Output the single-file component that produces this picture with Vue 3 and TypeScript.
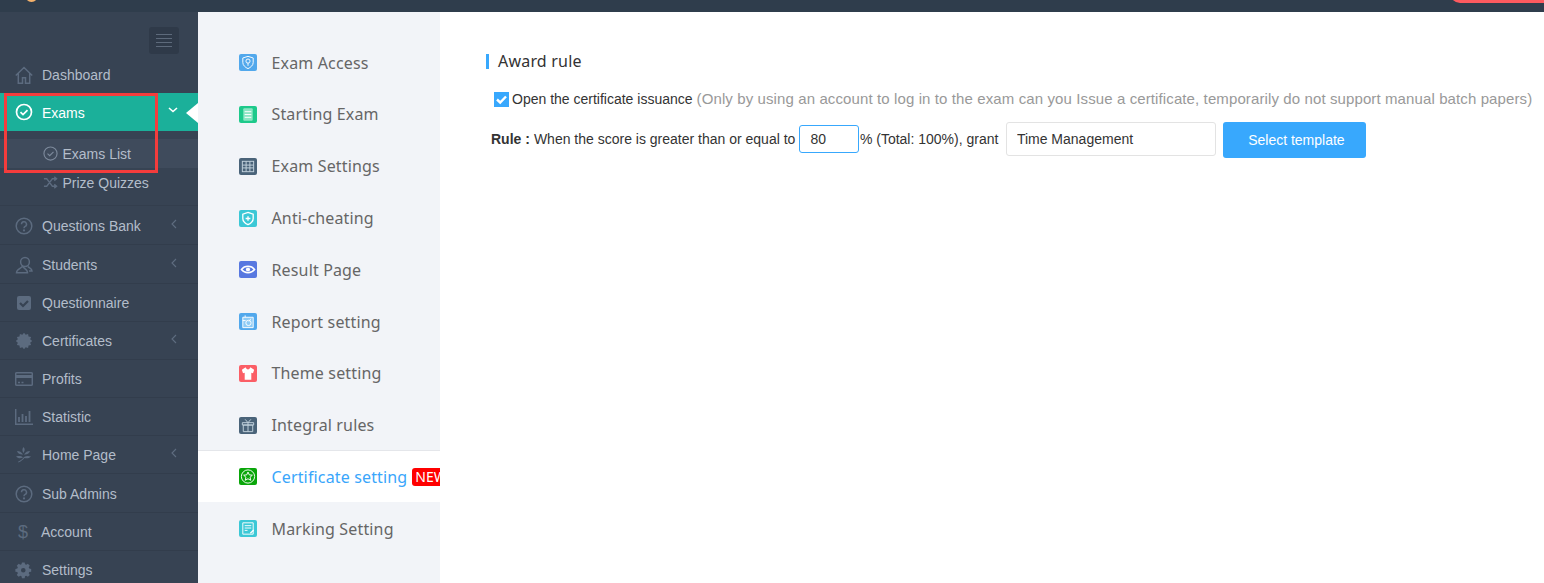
<script setup lang="ts">
interface SideItem { label: string; icon: string; arrow?: boolean; cls?: string }

const tone = '#5c6b7f'
const stroke = `fill="none" stroke="${tone}" stroke-width="1.5"`
const solid = `fill="${tone}"`

function burst(): string {
  const teeth = 12
  const pts: string[] = []
  for (let i = 0; i < teeth * 2; i++) {
    const r = i % 2 === 0 ? 8.2 : 6.4
    const a = (Math.PI * i) / teeth
    pts.push(`${(9 + r * Math.cos(a)).toFixed(2)},${(9 + r * Math.sin(a)).toFixed(2)}`)
  }
  return `<polygon ${solid} points="${pts.join(' ')}"/>`
}

const dashboard = `<path ${stroke} d="M.8 9.500 9 1.500l8.200 8M3.300 7.500v9.800h4.200v-5.500h3v5.500h4.200V7.500"/>`
const question = `<circle ${stroke} cx="9" cy="9" r="7.800"/><path ${stroke} stroke-width="1.700" d="M6.500 7.200a2.500 2.500 0 1 1 3.700 2.200c-.8.500-1.200.9-1.200 1.800"/><circle fill="${tone}" cx="9" cy="13.400" r="1.100"/>`

const lower: SideItem[] = [
  { label: 'Questions Bank', icon: question, arrow: true, cls: 'tall' },
  { label: 'Students', icon: `<circle ${stroke} cx="10" cy="6" r="4.400"/><path ${stroke} d="M7.500 10c0 2-6 2.500-6 6.800h11c0-4.300-5-4.800-5-6.800M13 10.500c1 1.500 4 2 4 4.500h-3"/>`, arrow: true, cls: 'tall' },
  { label: 'Questionnaire', icon: `<rect ${solid} x="2" y="2" width="14" height="14" rx="2"/><path fill="none" stroke="#374353" stroke-width="2.200" d="m5 9 3 3 5-5"/>` },
  { label: 'Certificates', icon: burst(), arrow: true },
  { label: 'Profits', icon: `<rect ${stroke} x="0.700" y="2.700" width="16.600" height="12.600" rx="1"/><rect ${solid} x="1" y="5" width="16" height="3"/><path ${stroke} d="M3 12.500h2M6.500 12.500h2"/>` },
  { label: 'Statistic', icon: `<path ${stroke} d="M.7 1v15.300h18"/><path fill="none" stroke="${tone}" stroke-width="1.800" d="M4 14V9M7.500 14V6M11 14V8M14.500 14V3"/>` },
  { label: 'Home Page', icon: `<path ${solid} d="M8.500 1c1.500 1.500 1.500 3.500.5 5l-.5 1c-1.500-2-1.500-4 0-6zM2 5c2.500 0 4.500 1 6 3.500C5.500 8.800 3 8 2 5zm13 0c-1 3-3.500 3.800-6 3.500C10.500 6 12.500 5 15 5zM1 10.500c3-.8 5.500-.5 7 1-2.500 1.200-5 1-7-1zm15 0c-2 2-4 2.200-6.500 1.500-1.500 1.500-3 3-6 4.500l-.5-.8c2.500-1 4.500-2.700 6-4.700 2-1.200 4.500-1.300 7-.5z"/>`, arrow: true },
  { label: 'Sub Admins', icon: question, cls: 'tall' },
  { label: 'Account', icon: `<text x="3" y="15" font-family="Liberation Sans, sans-serif" font-size="18" fill="${tone}">$</text>`, cls: 'money' },
  { label: 'Settings', icon: `<path ${solid} fill-rule="evenodd" d="M7.500 1.500h3l.4 2.100 1.300.6 1.800-1.200 2.100 2.100-1.200 1.800.6 1.300 2.100.4v3l-2.100.4-.6 1.300 1.200 1.800-2.100 2.100-1.800-1.200-1.300.6-.4 2.100h-3l-.4-2.100-1.300-.6-1.800 1.200-2.100-2.100 1.200-1.800-.6-1.300-2.100-.4v-3l2.100-.4.6-1.300-1.200-1.800 2.100-2.100 1.800 1.200 1.300-.6zM9 7.500a2.500 2.500 0 1 0 0 5 2.500 2.500 0 0 0 0-5z" transform="scale(.92)"/>` },
]

interface NavItem { label: string; bg: string; icon: string; active?: boolean }
const w = 'fill="none" stroke="#fff" stroke-width="1"'
const soft = 'fill="none" stroke="#c4d3de" stroke-width="1"'
const nav: NavItem[] = [
  { label: 'Exam Access', bg: '#52a8ec', icon: `<path ${w} d="M9 2.500l5.500 1.700v4.800c0 3-2.800 5.300-5.500 6.500-2.700-1.200-5.500-3.500-5.500-6.500V4.200z"/><circle ${w} cx="9" cy="7.500" r="2.200"/><path ${w} d="M9 9.700v2.800"/>` },
  { label: 'Starting Exam', bg: '#1ec98b', icon: `<rect x="4" y="2.500" width="10" height="13" rx="1" fill="#8ce6c4"/><path ${w} d="M5.500 6h7M5.500 9h7M5.500 12h7"/>` },
  { label: 'Exam Settings', bg: '#4a6379', icon: `<rect ${soft} x="3" y="3.500" width="12" height="11"/><path ${soft} d="M7 3.500v11M11 3.500v11M3 7.500h12M3 10.500h12"/>` },
  { label: 'Anti-cheating', bg: '#3cc8d6', icon: `<path fill="none" stroke="#fff" stroke-width="1.400" d="M9 2.500l5.500 2v4.500c0 3-2.800 5.300-5.500 6.500-2.700-1.200-5.500-3.500-5.500-6.500V4.500z"/><path stroke="#fff" stroke-width="1.400" d="M9 6.500v5M6.500 9h5"/>` },
  { label: 'Result Page', bg: '#5878e0', icon: `<path fill="none" stroke="#fff" stroke-width="1.500" d="M2 9C5.500 4.500 12.500 4.500 16 9 12.500 13.500 5.500 13.500 2 9z"/><circle fill="#fff" cx="9" cy="9" r="2.200"/>` },
  { label: 'Report setting', bg: '#52a8ec', icon: `<path fill="#8ecbf5" d="M3.500 4.500h11v11h-11z"/><path ${w} d="M3.500 4.500h11v11h-11zM6 4.500V2.500M3.500 8h3"/><circle ${w} cx="9.500" cy="10.500" r="2.800"/><path ${w} d="m10 9 2-3"/>` },
  { label: 'Theme setting', bg: '#fb5e66', icon: `<path fill="#fff" d="M6.500 2.500 2.500 5l1.200 3.800 1.800-.6V15.500h7V8.200l1.800.6L15.500 5l-4-2.500C11 4 10 4.800 9 4.800S7 4 6.500 2.500z"/>` },
  { label: 'Integral rules', bg: '#4a6379', icon: `<path ${soft} d="M3 6h12v2.500H3zM4 8.500h10V15.500H4zM9 6v9.500M6 2.500 9 6l3-3.500"/>` },
  { label: 'Certificate setting', bg: '#0aa60a', active: true, icon: `<circle ${w} cx="9" cy="9" r="7"/><path ${w} d="m9 4.300 1.400 3 3.200.3-2.400 2.200.7 3.200L9 11.400l-2.900 1.600.7-3.200-2.400-2.200 3.200-.3z"/>` },
  { label: 'Marking Setting', bg: '#3cc8d6', icon: `<path ${w} d="M3.500 3h11v12h-11zM5.500 6h7M5.500 8.500h7M5.500 11h3"/><path fill="#fff" d="m11 13.500 3.500-3.500 1 1-3.500 3.500z"/>` },
]
</script>

<template>
  <div class="page">
    <header class="topbar">
      <span class="logo"></span>
      <span class="grow"></span>
      <span class="top-btn"></span>
    </header>

    <div class="body">
      <aside class="side">
        <div class="toggle-row">
          <button class="toggle" type="button" aria-label="Toggle menu">
            <i></i><i></i><i></i><i></i>
          </button>
        </div>

        <a class="row dash">
          <svg class="ico" viewBox="0 0 18 18" width="18" height="18" v-html="dashboard"></svg>
          <span>Dashboard</span>
        </a>

        <a class="row exams">
          <svg class="ico" viewBox="0 0 18 18" width="18" height="18">
            <circle cx="9" cy="9" r="7.500" fill="none" stroke="#fff" stroke-width="1.700" />
            <path d="m5.500 9.200 2.500 2.400 4.500-4.500" fill="none" stroke="#fff" stroke-width="1.700" />
          </svg>
          <span class="grow">Exams</span>
          <svg class="chev" viewBox="0 0 10 6" width="10" height="6">
            <path d="m1 1 4 3.500L9 1" fill="none" stroke="#fff" stroke-width="1.600" />
          </svg>
          <span class="notch"></span>
        </a>

        <div class="sub">
          <a class="sub-row current">
            <svg viewBox="0 0 16 16" width="15" height="15">
              <circle cx="8" cy="8" r="7" fill="none" stroke="#7d8a9c" stroke-width="1.200" />
              <path d="m4.800 8.200 2.300 2.200 4.100-4.200" fill="none" stroke="#7d8a9c" stroke-width="1.200" />
            </svg>
            <span>Exams List</span>
          </a>
          <a class="sub-row">
            <svg viewBox="0 0 16 16" width="15" height="15">
              <path d="M1 4h3l6 8h4M1 12h3l6-8h4M12 2l2.500 2L12 6M12 10l2.500 2-2.500 2" fill="none" stroke="#5c6b7f" stroke-width="1.400" />
            </svg>
            <span>Prize Quizzes</span>
          </a>
        </div>

        <a v-for="item in lower" :key="item.label" class="row line" :class="item.cls">
          <svg class="ico" viewBox="0 0 18 18" width="18" height="18" v-html="item.icon"></svg>
          <span class="grow">{{ item.label }}</span>
          <svg v-if="item.arrow" class="back" viewBox="0 0 6 10" width="6" height="10">
            <path d="M5 1 1 5l4 4" fill="none" stroke="#5f6d80" stroke-width="1.100" />
          </svg>
        </a>

        <span class="annotation"></span>
      </aside>

      <nav class="nav">
        <a v-for="item in nav" :key="item.label" class="nav-row" :class="{ active: item.active }">
          <svg class="nav-ico" viewBox="0 0 18 18" width="18" height="17" :style="{ background: item.bg }" v-html="item.icon"></svg>
          <span class="nav-label">{{ item.label }}</span>
          <span v-if="item.active" class="badge">NEW</span>
        </a>
      </nav>

      <main class="main">
        <h2 class="title">Award rule</h2>

        <div class="check-line">
          <span class="check">
            <svg viewBox="0 0 15 15" width="15" height="15">
              <path d="m3 7.500 3.200 3L12 4.500" fill="none" stroke="#fff" stroke-width="2.400" />
            </svg>
          </span>
          <span class="dark">Open the certificate issuance</span>
          <span class="muted">(Only by using an account to log in to the exam can you Issue a certificate, temporarily do not support manual batch papers)</span>
        </div>

        <div class="rule-line">
          <b class="rule">Rule :</b>
          <span class="when">When the score is greater than or equal to</span>
          <input class="score" value="80" readonly />
          <span class="total">% (Total: 100%), grant</span>
          <input class="tpl" value="Time Management" readonly />
          <button class="select" type="button">Select template</button>
        </div>
      </main>
    </div>
  </div>
</template>

<style>
html, body { margin: 0; overflow: hidden; background: #fff; }
</style>

<style scoped>
.page {
  width: 1544px;
  height: 583px;
  display: flex;
  flex-direction: column;
  overflow: hidden;
  font-family: "Liberation Sans", Arial, sans-serif;
  font-size: 14px;
}
.grow { flex: 1; }

.topbar {
  height: 12px;
  flex: none;
  display: flex;
  align-items: flex-end;
  overflow: hidden;
  background: #2f3d4c;
}
.logo {
  width: 13px;
  height: 13px;
  margin: 0 0 10px 25px;
  border-radius: 50%;
  background: #f5b26b;
}
.top-btn {
  width: 94px;
  height: 24px;
  margin-bottom: 9px;
  flex: none;
  background: #fc5a5f;
  border-radius: 0 0 0 10px;
}

.body { flex: 1; display: flex; min-height: 0; }

.side {
  position: relative;
  width: 198px;
  flex: none;
  background: #374353;
  color: #b3bdca;
  overflow: hidden;
}
.toggle-row { display: flex; justify-content: flex-end; padding: 15px 19px 0 0; height: 29px; }
.toggle {
  width: 30px;
  height: 27px;
  padding: 0;
  border: 0;
  border-radius: 3px;
  background: #2f3a49;
  display: flex;
  flex-direction: column;
  align-items: center;
  justify-content: center;
  gap: 3px;
}
.toggle i { display: block; width: 16px; height: 1px; background: #5d6a7b; }

.row {
  display: flex;
  align-items: center;
  height: 37px;
  padding-left: 15px;
  box-sizing: border-box;
}
.ico { flex: none; margin-right: 9px; }
.dash { height: 37px; }

.exams {
  position: relative;
  height: 38px;
  background: #1bb09a;
  color: #fff;
}
.exams .grow { padding-top: 2px; }
.chev { margin-right: 20px; margin-top: -4px; }
.notch {
  position: absolute;
  right: 0;
  top: 10px;
  width: 0;
  height: 0;
  border: 10px solid transparent;
  border-left: 0;
  border-right: 12px solid #fff;
}

.sub { padding: 8px 0 8px; border-bottom: 1px solid #333e4d; height: 58px; }
.sub-row {
  display: flex;
  align-items: center;
  gap: 4.500px;
  height: 29px;
  padding-left: 43px;
}
.current { background: #3f4b5c; }

.line { height: 38px; padding-top: 1px; border-bottom: 1px solid #323d4c; }
.tall { height: 39px; }
.money .ico { margin-right: 8px; }
.back { margin-right: 21px; margin-top: -4px; }

.annotation {
  position: absolute;
  left: 4px;
  top: 81px;
  width: 154px;
  height: 80px;
  box-sizing: border-box;
  border: 3px solid #f43c3c;
}

.nav {
  width: 242px;
  flex: none;
  padding-top: 24.800px;
  background: #f2f4f8;
  overflow: hidden;
  box-sizing: border-box;
  font-family: "Noto Sans", "Open Sans", sans-serif;
  font-size: 16px;
  letter-spacing: 0.150px;
  color: #666;
}
.nav-row {
  display: flex;
  align-items: center;
  height: 51.800px;
  padding-left: 41px;
  box-sizing: border-box;
  white-space: nowrap;
}
.nav-ico { flex: none; border-radius: 2px; margin-right: 14.500px; }
.nav-row.active {
  height: 52px;
  margin: -1.200px 0 1px;
  background: #fff;
  color: #39a6fb;
  border-top: 1px solid #e4e6ea;
  padding-top: 1px;
}
.badge {
  flex: none;
  margin-left: 5px;
  padding: 0 3px;
  height: 18px;
  line-height: 18px;
  border-radius: 3px;
  background: #f00;
  color: #fff;
  font-size: 14px;
  letter-spacing: 0;
}

.main { flex: 1; padding: 0 0 0 46px; color: #333; min-width: 0; white-space: nowrap; }
.title {
  margin: 42px 0 0;
  height: 15px;
  line-height: 15px;
  padding-left: 9px;
  border-left: 3px solid #38a8fd;
  font-size: 16px;
  font-weight: 400;
  letter-spacing: 0.200px;
  font-family: "Noto Sans", "Open Sans", sans-serif;
  color: #333;
}
.check-line { display: flex; align-items: center; gap: 3px; margin: 22px 0 0 8px; height: 16px; }
.check {
  width: 15px;
  height: 15px;
  background: #38a8fd;
  display: block;
}
.check svg { display: block; }
.muted { color: #999; margin: 0 0 2px 1px; font-size: 15px; letter-spacing: 0.110px; }

.rule-line { display: flex; align-items: flex-start; margin: 15px 0 0 5px; }
.rule, .when, .total { line-height: 34px; }
.rule { margin-right: 4px; }
.when { margin-right: 4px; }
.score {
  width: 60px;
  height: 28px;
  margin-top: 3px;
  margin-right: 0.500px;
  padding: 0 0 0 10px;
  box-sizing: border-box;
  border: 1px solid #38a8fd;
  border-radius: 3px;
  font: inherit;
  color: #333;
  outline: none;
}
.total { margin-right: 7.500px; }
.tpl {
  width: 210px;
  height: 34px;
  padding: 0 0 0 10px;
  box-sizing: border-box;
  border: 1px solid #e3e3e3;
  border-radius: 3px;
  font: inherit;
  color: #333;
  outline: none;
}
.select {
  width: 143px;
  height: 36px;
  margin-left: 7px;
  padding: 0 0 0 4px;
  border: 0;
  border-radius: 3px;
  background: #38a8fd;
  color: #fff;
  font: inherit;
}
</style>
